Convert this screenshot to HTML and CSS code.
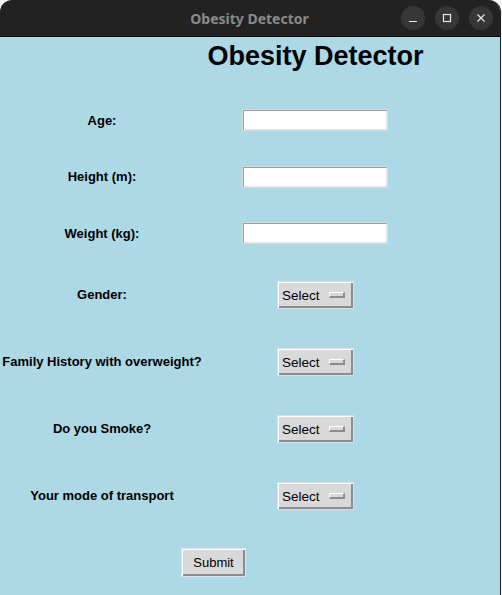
FILE: index.html
```html
<!DOCTYPE html>
<html>
<head>
<meta charset="utf-8">
<title>Obesity Detector</title>
<link rel="stylesheet" href="styles.css">
</head>
<body>
<div class="window">
  <div class="titlebar">
    <span class="titlebar-text">Obesity Detector</span>
    <div class="wm-buttons">
      <span class="wm-btn"><svg width="10" height="10" viewBox="0 0 10 10"><path d="M1 8.5h8" stroke="#e6e6e6" stroke-width="1.2"/></svg></span>
      <span class="wm-btn"><svg width="10" height="10" viewBox="0 0 10 10"><rect x="1.5" y="1.5" width="7" height="7" fill="none" stroke="#e6e6e6" stroke-width="1.2"/></svg></span>
      <span class="wm-btn"><svg width="10" height="10" viewBox="0 0 10 10"><path d="M1.5 1.5l7 7M8.5 1.5l-7 7" stroke="#e6e6e6" stroke-width="1.3"/></svg></span>
    </div>
  </div>
  <div class="content">
    <div class="empty"></div>
    <h1 class="heading">Obesity Detector</h1>

    <label class="lbl">Age:</label>
    <div class="cell"><input class="entry" type="text"></div>

    <label class="lbl">Height (m):</label>
    <div class="cell"><input class="entry" type="text"></div>

    <label class="lbl">Weight (kg):</label>
    <div class="cell"><input class="entry" type="text"></div>

    <label class="lbl">Gender:</label>
    <div class="cell"><button class="optmenu">Select<span class="indicator"></span></button></div>

    <label class="lbl">Family History with overweight?</label>
    <div class="cell"><button class="optmenu">Select<span class="indicator"></span></button></div>

    <label class="lbl">Do you Smoke?</label>
    <div class="cell"><button class="optmenu">Select<span class="indicator"></span></button></div>

    <label class="lbl">Your mode of transport</label>
    <div class="cell"><button class="optmenu">Select<span class="indicator"></span></button></div>

    <div class="submit-cell"><button class="submit">Submit</button></div>
  </div>
</div>
</body>
</html>
```

FILE: styles.css
```css
html, body {
  margin: 0;
  padding: 0;
  background: #f6f6f6;
  width: 502px;
  height: 595px;
  overflow: hidden;
}

.window {
  width: 500px;
  height: 595px;
  border-right: 1px solid #1e1e1e;
  border-radius: 12px 12px 0 0;
  overflow: hidden;
  display: flex;
  flex-direction: column;
}

.titlebar {
  height: 36px;
  flex: none;
  background: #222222;
  border-bottom: 1px solid #000;
  position: relative;
  display: flex;
  align-items: center;
  justify-content: center;
}

.titlebar-text {
  font-family: "Noto Sans", "DejaVu Sans", sans-serif;
  font-weight: 700;
  font-size: 14px;
  color: #8a8a8a;
  margin-left: -1px;
}

.wm-buttons {
  position: absolute;
  right: 7px;
  top: 6px;
  display: flex;
  gap: 10px;
}

.wm-btn {
  width: 24px;
  height: 24px;
  border-radius: 50%;
  background: #363636;
  display: flex;
  align-items: center;
  justify-content: center;
}

.content {
  flex: 1;
  background: #add8e6;
  display: grid;
  grid-template-columns: 204px 223px;
  grid-template-rows: 55px 56px 57px 56px 67px 67px 67px 67px 1fr;
  font-family: "Liberation Sans", Arial, sans-serif;
}

.heading {
  margin: 0;
  padding-top: 4px;
  font-size: 27px;
  font-weight: 700;
  text-align: center;
  align-self: start;
  color: #000;
  line-height: 31px;
}

.lbl {
  font-size: 13px;
  font-weight: 700;
  color: #000;
  display: flex;
  align-items: center;
  justify-content: center;
  white-space: nowrap;
}

.cell {
  display: flex;
  align-items: center;
  justify-content: center;
}

.entry {
  box-sizing: border-box;
  width: 146px;
  height: 22px;
  margin: 0 0 0 -1px;
  padding: 0;
  background: #ffffff;
  border: 1px solid #dadada;
  box-shadow: inset 1px 1px 0 #9c9c9c, inset -1px -1px 0 #e4e4e4;
  outline: none;
}

.optmenu {
  box-sizing: border-box;
  width: 77px;
  height: 28px;
  margin: 1px 0 0 0;
  padding: 0 0 0 4px;
  background: #d9d9d9;
  border: 1px solid #dedede;
  box-shadow: inset 1px 1px 0 #ffffff, inset -2px -2px 0 #8c8c8c;
  display: flex;
  align-items: center;
  font-family: "Liberation Sans", Arial, sans-serif;
  font-size: 13.5px;
  color: #000;
  cursor: default;
}

.indicator {
  box-sizing: border-box;
  width: 16px;
  height: 6px;
  margin-left: auto;
  margin-right: 8px;
  background: #d9d9d9;
  border-style: solid;
  border-width: 1px 2px 2px 1px;
  border-color: #ffffff #8c8c8c #8c8c8c #ffffff;
}

.submit-cell {
  grid-column: 1 / 3;
  display: flex;
  align-items: center;
  justify-content: center;
}

.submit {
  box-sizing: border-box;
  width: 65px;
  height: 29px;
  margin-top: 1px;
  padding: 0;
  background: #d9d9d9;
  border: 1px solid #e2e2e2;
  box-shadow: inset 1px 1px 0 #ffffff, inset -2px -2px 0 #8c8c8c;
  font-family: "Liberation Sans", Arial, sans-serif;
  font-size: 13px;
  color: #000;
}
```
